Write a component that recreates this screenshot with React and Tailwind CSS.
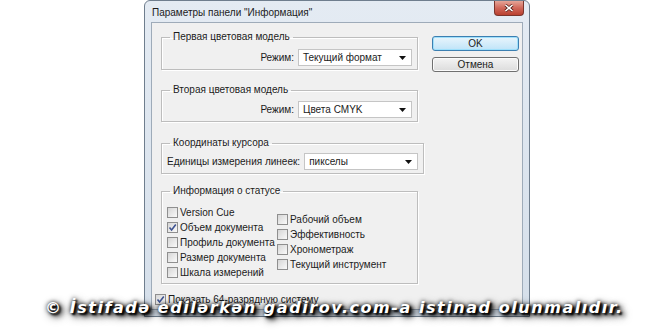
import React from 'react';

const Dropdown = ({ value }) => (
  <div className="w-[114px] h-[17px] shrink-0 bg-white border border-[#c5c5c5] flex items-center pl-[4px] pr-[5px]">
    <span className="leading-none whitespace-nowrap">{value}</span>
    <svg className="ml-auto" width="7" height="4" viewBox="0 0 7 4">
      <path d="M0 0 H7 L3.5 4 Z" fill="#111" />
    </svg>
  </div>
);

const Checkbox = ({ label, checked }) => (
  <div className="h-[15px] flex items-center gap-[2px]">
    <div className="w-[11px] h-[11px] shrink-0 border border-[#8f8f8f] bg-gradient-to-br from-[#d6d6d6] to-[#fafafa] flex items-center justify-center">
      {checked && (
        <svg width="9" height="9" viewBox="0 0 9 9">
          <path d="M1.5 4.5 L3.6 7 L7.8 1.5" fill="none" stroke="#3e5391" strokeWidth="1.6" />
        </svg>
      )}
    </div>
    <span className="whitespace-nowrap">{label}</span>
  </div>
);

const Group = ({ title, className = '', children }) => (
  <fieldset className={`border border-[#bdbdbd] shadow-[inset_1px_1px_0_#fff,1px_1px_0_#fff] pl-[5px] pr-[5px] ${className}`}>
    <legend className="ml-[3px] px-[3px] leading-[14px]">{title}</legend>
    {children}
  </fieldset>
);

const App = () => {
  return (
    <div className="relative w-[660px] h-[330px] bg-white overflow-hidden font-['Liberation_Sans',Arial,sans-serif] text-[10px] text-[#1b1b1b]">
      {/* window */}
      <div className="ml-[144px] w-[386px] h-[317px] rounded-t-[6px] border border-[#6f7e8e] bg-gradient-to-b from-[#e4ebf3] to-[#d5dfea] flex flex-col px-[6px] pb-[6px]">
        <div className="h-[21px] flex items-start">
          <span className="mt-[5px] pl-[1px] leading-[13px] whitespace-nowrap">Параметры панели "Информация"</span>
          <div className="ml-auto -mr-[1px] w-[30px] h-[15px] rounded-b-[4px] border border-t-0 border-[#7b352c] bg-gradient-to-b from-[#e5a598] via-[#d0675a] to-[#b9402f] flex items-center justify-center">
            <svg width="10" height="8" viewBox="0 0 10 8">
              <path d="M1.5 1 L8.5 7 M8.5 1 L1.5 7" stroke="#4a1a14" strokeWidth="3" />
              <path d="M1.5 1 L8.5 7 M8.5 1 L1.5 7" stroke="#fff" strokeWidth="1.6" />
            </svg>
          </div>
        </div>

        <div className="flex-1 border border-[#9eabb9] bg-[#f0f0f0] flex pt-[7px] pl-[9px]">
          <div className="w-[257px] flex flex-col">
            <Group title="Первая цветовая модель" className="pb-[3px]">
              <div className="mt-[5px] flex items-center justify-end gap-[4px]">
                <span>Режим:</span>
                <Dropdown value="Текущий формат" />
              </div>
            </Group>

            <Group title="Вторая цветовая модель" className="mt-[13px] pb-[3px]">
              <div className="mt-[4px] flex items-center justify-end gap-[4px]">
                <span>Режим:</span>
                <Dropdown value="Цвета CMYK" />
              </div>
            </Group>

            <Group title="Координаты курсора" className="mt-[14px] pb-[3px]">
              <div className="mt-[3px] flex items-center justify-end gap-[4px]">
                <span className="whitespace-nowrap">Единицы измерения линеек:</span>
                <Dropdown value="пикселы" />
              </div>
            </Group>

            <Group title="Информация о статусе" className="mt-[10px] pb-[3px]">
              <div className="mt-[7px] flex">
                <div className="w-[110px] shrink-0 flex flex-col">
                  <Checkbox label="Version Cue" />
                  <Checkbox label="Объем документа" checked />
                  <Checkbox label="Профиль документа" />
                  <Checkbox label="Размер документа" />
                  <Checkbox label="Шкала измерений" />
                </div>
                <div className="pt-[7px] flex flex-col">
                  <Checkbox label="Рабочий объем" />
                  <Checkbox label="Эффективность" />
                  <Checkbox label="Хронометраж" />
                  <Checkbox label="Текущий инструмент" />
                </div>
              </div>
            </Group>

            <div className="mt-[8px] -ml-[6px]">
              <Checkbox label="Показать 64-разрядную систему" checked />
            </div>
          </div>

          <div className="ml-[14px] w-[87px] pt-[6px] flex flex-col gap-[6px]">
            <div className="h-[15px] rounded-[3px] border border-[#3c7fb1] bg-gradient-to-b from-[#e9f5fc] to-[#bfe4f8] shadow-[inset_0_0_0_1px_#9fe0fb] flex items-center justify-center">
              OK
            </div>
            <div className="h-[15px] rounded-[3px] border border-[#707070] bg-gradient-to-b from-[#f4f4f4] to-[#dcdcdc] shadow-[inset_0_0_0_1px_#fbfbfb] flex items-center justify-center">
              Отмена
            </div>
          </div>
        </div>
      </div>

      {/* watermark */}
      <div className="absolute left-[45px] top-[298px] whitespace-nowrap font-['DejaVu_Sans',sans-serif] text-[16px] leading-[20px] font-bold italic tracking-[1.55px] text-white [text-shadow:2px_2px_2px_#000,4px_3px_5px_#000,0_0_4px_#000,3px_3px_10px_#111]">
        © İstifadə edilərkən gadirov.com-a istinad olunmalıdır.
      </div>
    </div>
  );
};

export default App;
